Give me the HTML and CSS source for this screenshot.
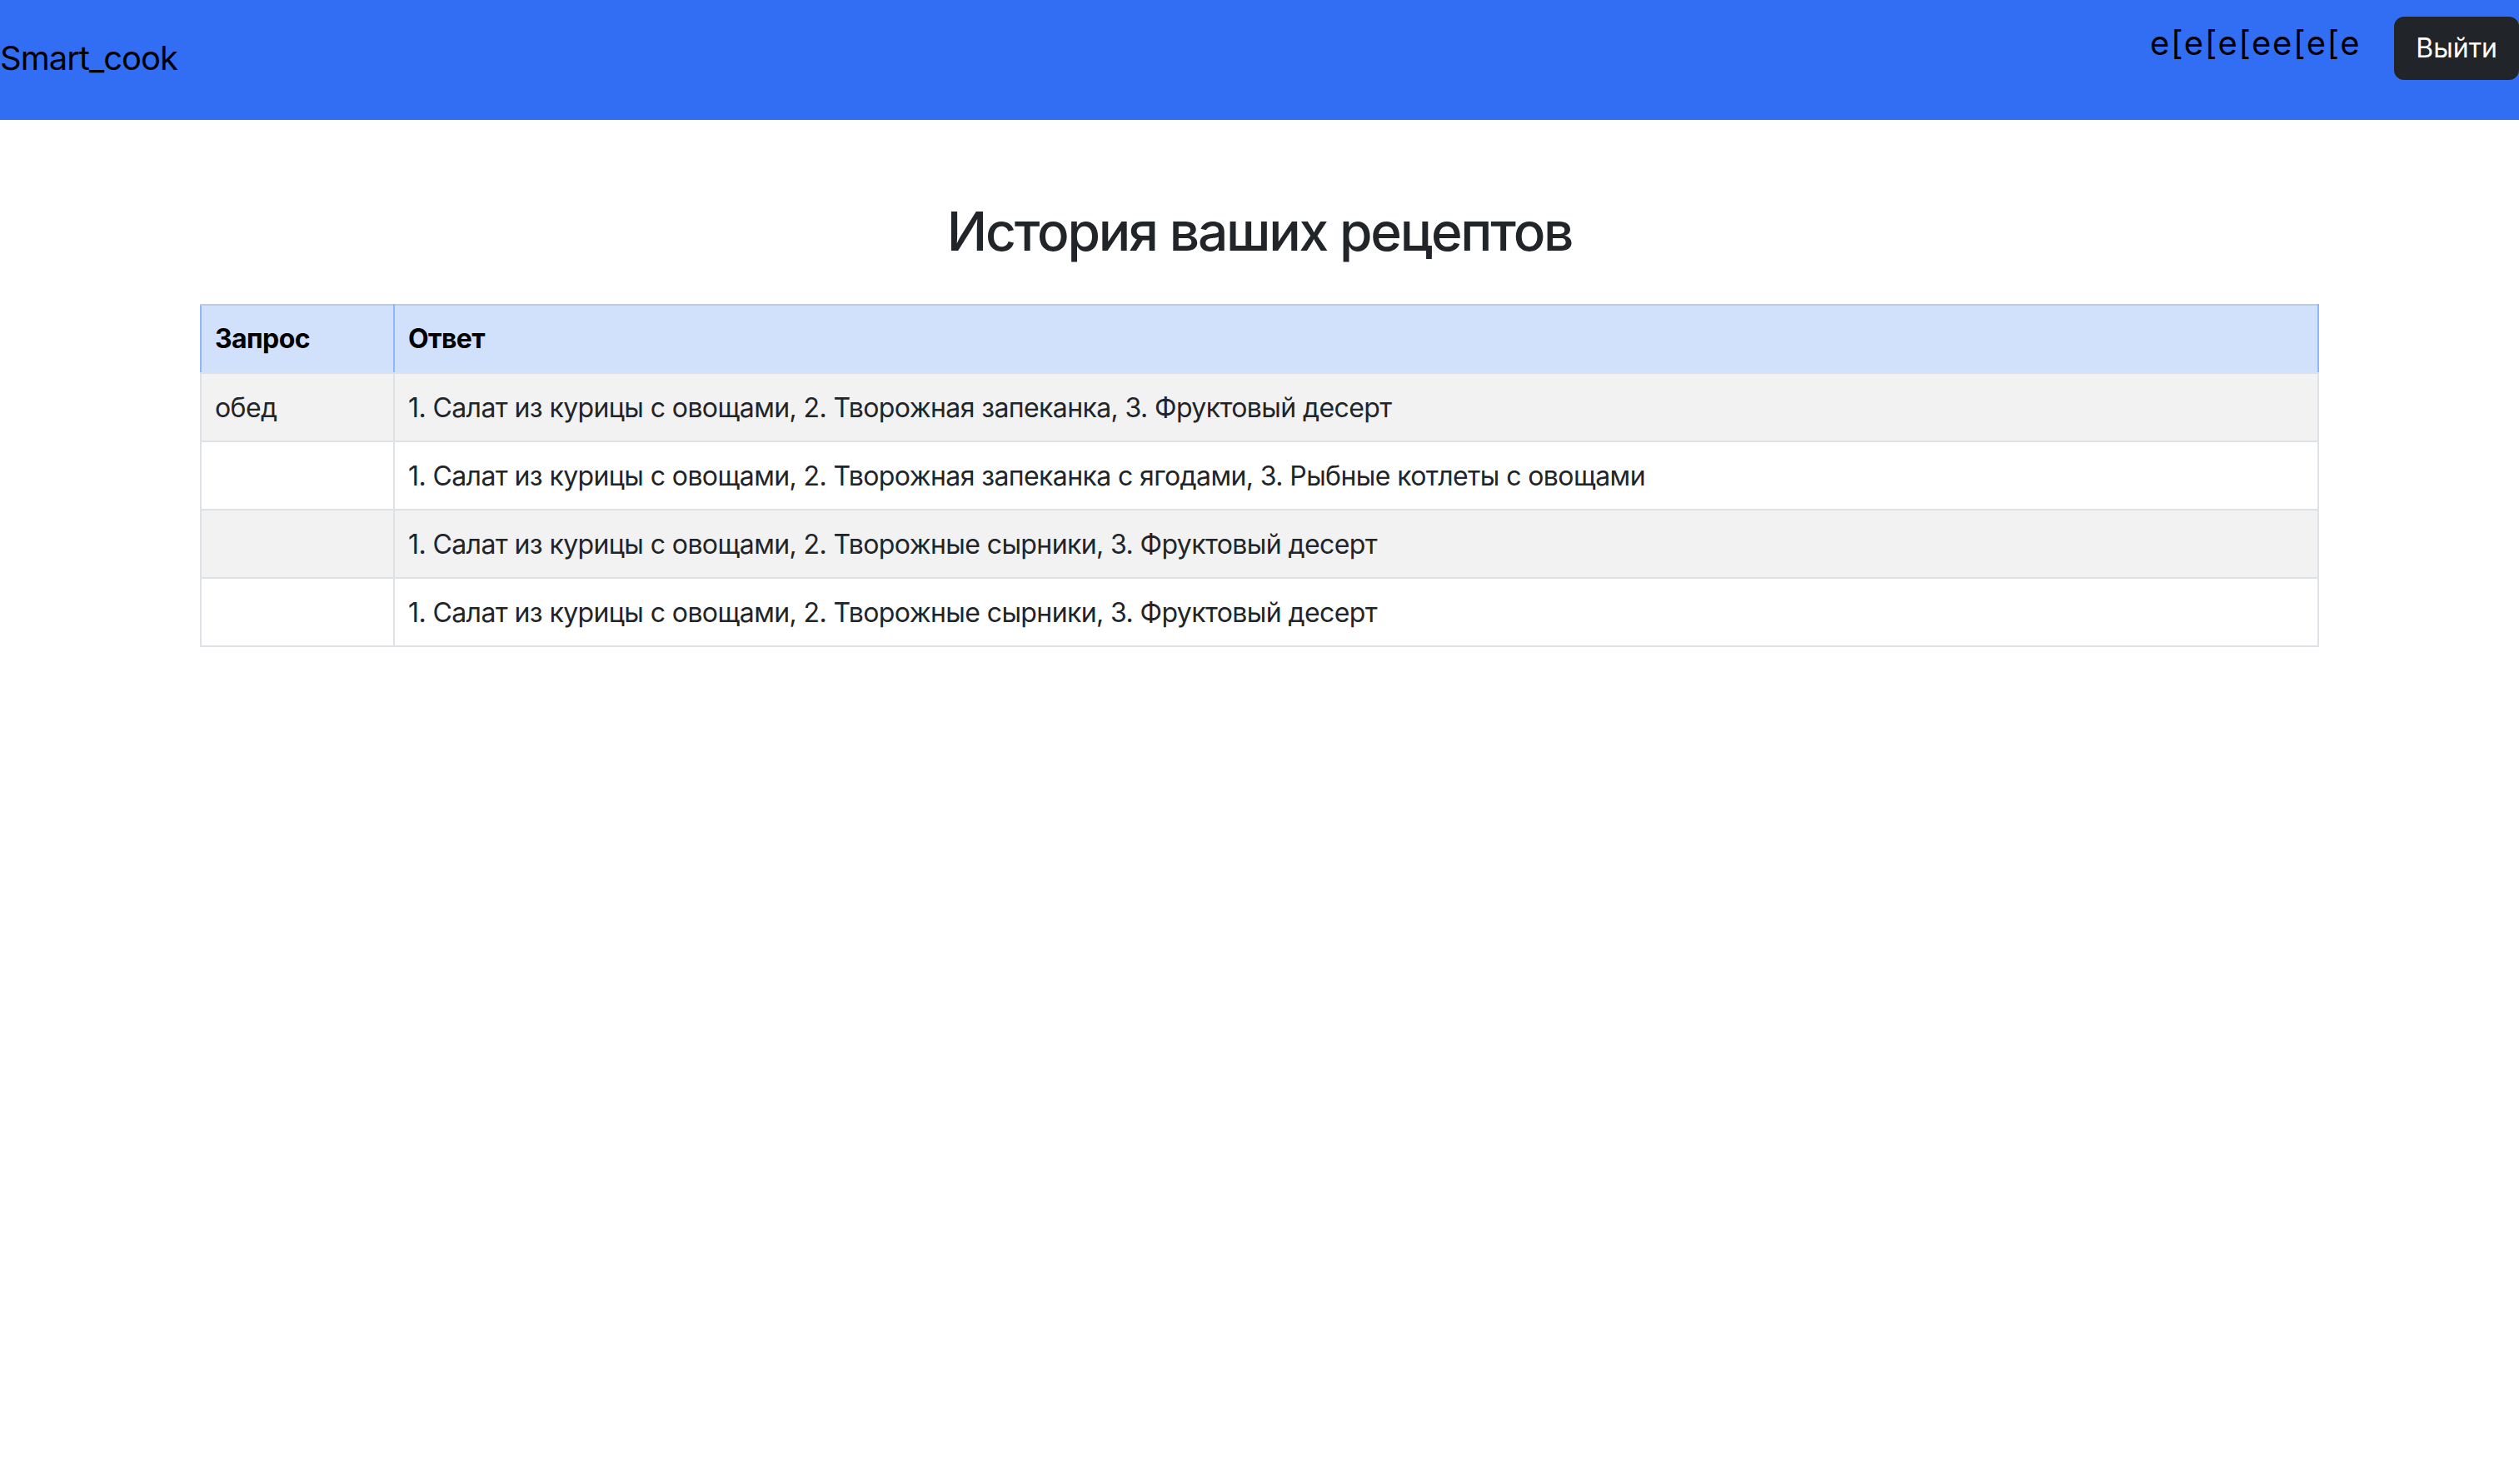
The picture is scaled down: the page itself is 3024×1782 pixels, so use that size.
FILE: index.html
```html
<!DOCTYPE html>
<html lang="ru">
<head>
<meta charset="utf-8">
<title>Smart_cook</title>
<link rel="stylesheet" href="styles.css">
</head>
<body>
<nav class="navbar">
  <a class="brand" href="#">Smart_cook</a>
  <div class="nav-right">
    <span class="user">e[e[e[ee[e[e</span>
    <button class="btn-logout" type="button">Выйти</button>
  </div>
</nav>
<main class="container">
  <h2 class="title">История ваших рецептов</h2>
  <table class="history">
    <thead>
      <tr><th class="col-q">Запрос</th><th>Ответ</th></tr>
    </thead>
    <tbody>
      <tr><td>обед</td><td>1. Салат из курицы с овощами, 2. Творожная запеканка, 3. Фруктовый десерт</td></tr>
      <tr><td></td><td>1. Салат из курицы с овощами, 2. Творожная запеканка с ягодами, 3. Рыбные котлеты с овощами</td></tr>
      <tr><td></td><td>1. Салат из курицы с овощами, 2. Творожные сырники, 3. Фруктовый десерт</td></tr>
      <tr><td></td><td>1. Салат из курицы с овощами, 2. Творожные сырники, 3. Фруктовый десерт</td></tr>
    </tbody>
  </table>
</main>
</body>
</html>
```

FILE: styles.css
```css
* { box-sizing: border-box; }
html, body { margin: 0; padding: 0; }
body {
  font-family: Inter, "Noto Sans", Roboto, sans-serif;
  font-size: 32px;
  line-height: 1.5;
  color: #212529;
  background: #fff;
}
.navbar {
  height: 144px;
  background: #326ef4;
  display: flex;
  justify-content: space-between;
  align-items: flex-start;
}
.brand {
  margin-top: 40px;
  font-size: 40px;
  line-height: 60px;
  letter-spacing: -1px;
  color: #000;
  text-decoration: none;
}
.nav-right {
  margin-top: 20px;
  display: flex;
  align-items: flex-start;
  gap: 40px;
}
.user {
  margin-top: 2px;
  font-size: 40px;
  line-height: 60px;
  letter-spacing: 1.6px;
  color: #000;
}
.btn-logout {
  font-family: inherit;
  font-size: 32px;
  line-height: 48px;
  padding: 12px 24px;
  color: #fff;
  background: #212529;
  border: 2px solid #212529;
  border-radius: 12px;
}
.container {
  width: 2544px;
  margin: 0 auto;
}
.title {
  margin: 96px 0 48px;
  font-size: 64px;
  line-height: 1.2;
  font-weight: 500;
  letter-spacing: -2.2px;
  text-align: center;
}
.history {
  width: 100%;
  border-collapse: collapse;
  border: 2px solid #dee2e6;
  letter-spacing: -0.6px;
}
.history th, .history td {
  padding: 16px;
  text-align: left;
  vertical-align: top;
  border: 2px solid #dee2e6;
}
.history td {
  padding: 17px 16px 15px;
}
.history thead th {
  background: #d2e1fb;
  color: #000;
  font-weight: 700;
  border-color: #bccbe6 #8cb8fc #dee2e6 #8cb8fc;
}
.history .col-q { width: 232px; }
.history tbody tr:nth-child(odd) td { background: #f2f2f2; }
```
